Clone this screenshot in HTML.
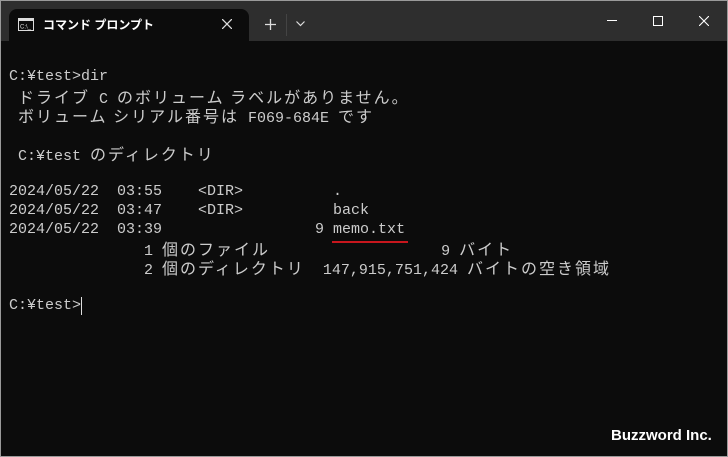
<!DOCTYPE html>
<html><head><meta charset="utf-8"><style>
body{margin:0;width:728px;height:457px;background:#0c0c0c;overflow:hidden;position:relative;font-family:"Liberation Mono","Noto Sans CJK JP",monospace;}
.frame{position:absolute;left:0;top:0;width:726px;height:455px;border:1px solid #9a9a9a;}
.title{position:absolute;left:1px;top:1px;width:726px;height:40px;background:#2e2e2e;}
.tab{position:absolute;left:9px;top:9px;width:240px;height:32px;background:#0c0c0c;border-radius:8px 8px 0 0;}
.tt{position:absolute;left:43px;top:16px;color:#fff;font:bold 12px "Liberation Sans","Noto Sans CJK JP",sans-serif;}
.l{position:absolute;left:9px;color:#cccccc;font-size:15px;white-space:pre;line-height:19px;}
.j{font-family:"Noto Sans CJK JP",sans-serif;font-size:16px;letter-spacing:2px;}
</style></head><body>
<div class="frame"></div>
<div class="title"></div>
<div class="tab"></div>
<svg style="position:absolute;left:18px;top:18px" width="16" height="13"><rect x="0.5" y="0.5" width="15" height="12" fill="none" stroke="#ddd"/><rect x="1" y="1" width="14" height="2" fill="#ddd"/><text x="2" y="10.5" font-size="6" fill="#ddd" font-family="Liberation Sans">C:\_</text></svg>
<div class="tt">コマンド プロンプト</div>
<svg style="position:absolute;left:222px;top:19px" width="10" height="10"><path d="M0 0L10 10M10 0L0 10" stroke="#ddd" stroke-width="1.3"/></svg>
<svg style="position:absolute;left:265px;top:19px" width="11" height="11"><path d="M5.5 0V11M0 5.5H11" stroke="#ddd" stroke-width="1.3"/></svg>
<div style="position:absolute;left:286px;top:14px;width:1px;height:22px;background:#444"></div>
<svg style="position:absolute;left:296px;top:21px" width="9" height="6"><path d="M0.5 0.5L4.5 4.5L8.5 0.5" stroke="#ddd" fill="none" stroke-width="1.2"/></svg>
<div style="position:absolute;left:607px;top:20px;width:10px;height:1px;background:#fff"></div>
<div style="position:absolute;left:653px;top:16px;width:8px;height:8px;border:1px solid #fff"></div>
<svg style="position:absolute;left:699px;top:16px" width="10" height="10"><path d="M0 0L10 10M10 0L0 10" stroke="#fff" stroke-width="1.1"/></svg>

<div class="l" style="top:67px">C:¥test&gt;dir</div>
<div class="l" style="top:87px"> <span class="j">ドライブ</span> C <span class="j">のボリューム ラベルがありません。</span></div>
<div class="l" style="top:106px"> <span class="j">ボリューム シリアル番号は</span> F069-684E <span class="j">です</span></div>
<div class="l" style="top:144px"> C:¥test <span class="j">のディレクトリ</span></div>
<div class="l" style="top:182px">2024/05/22  03:55    &lt;DIR&gt;          .</div>
<div class="l" style="top:201px">2024/05/22  03:47    &lt;DIR&gt;          back</div>
<div class="l" style="top:220px">2024/05/22  03:39                 9 memo.txt</div>
<div class="l" style="top:239px">               1 <span class="j">個のファイル</span>                   9 <span class="j">バイト</span></div>
<div class="l" style="top:258px">               2 <span class="j">個のディレクトリ</span>  147,915,751,424 <span class="j">バイトの空き領域</span></div>
<div class="l" style="top:296px">C:¥test&gt;</div>
<div style="position:absolute;left:81px;top:297px;width:1px;height:18px;background:#ddd"></div>
<div style="position:absolute;left:332px;top:241px;width:76px;height:2px;background:#c8161d"></div>
<div style="position:absolute;left:611px;top:427px;color:#fff;font:bold 15px 'Liberation Sans',sans-serif;">Buzzword Inc.</div>
</body></html>
